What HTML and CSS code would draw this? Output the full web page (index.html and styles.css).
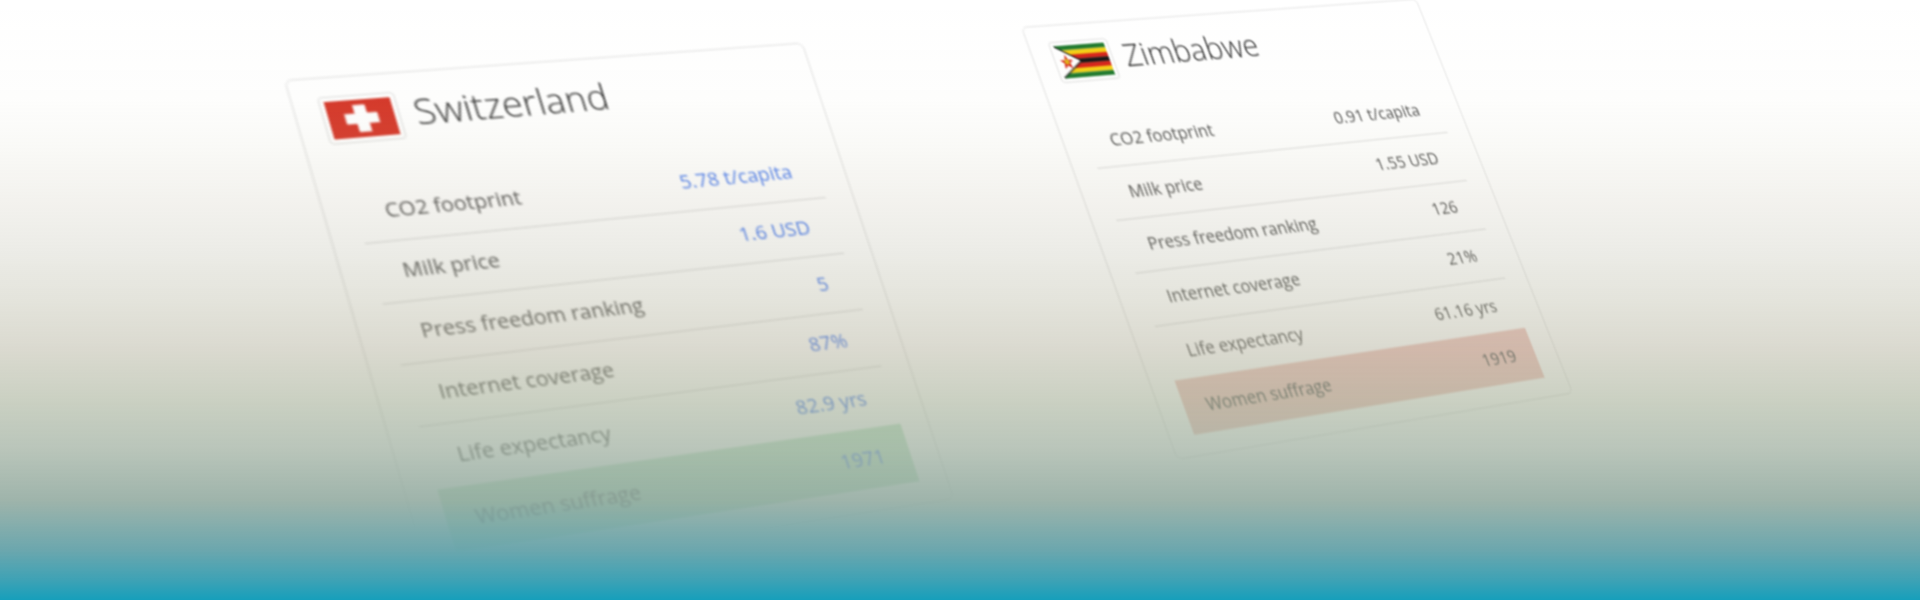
FILE: index.html
```html
<!DOCTYPE html>
<html lang="en">
<head>
    <meta charset="UTF-8">
    <meta name="viewport" content="width=device-width, initial-scale=1.0">
    <title>Country comparison</title>
    <link rel="stylesheet" href="styles.css">
</head>
<body>
    <div class="stage">
        <div class="card card-left">
            <div class="card-head">
                <div class="flag-box">
                    <svg class="flag" viewBox="0 0 64 36" preserveAspectRatio="none">
                        <rect width="64" height="36" fill="#d6392b"/>
                        <rect x="16" y="13" width="32" height="10" fill="#fff"/>
                        <rect x="26" y="5" width="12" height="26" fill="#fff"/>
                    </svg>
                </div>
                <div class="country">Switzerland</div>
            </div>
            <ul class="rows">
                <li class="row"><span>CO2 footprint</span><span class="value">5.78 t/capita</span></li>
                <li class="row"><span>Milk price</span><span class="value">1.6 USD</span></li>
                <li class="row"><span>Press freedom ranking</span><span class="value">5</span></li>
                <li class="row"><span>Internet coverage</span><span class="value">87%</span></li>
                <li class="row"><span>Life expectancy</span><span class="value">82.9 yrs</span></li>
                <li class="row row-good"><span>Women suffrage</span><span class="value">1971</span></li>
            </ul>
        </div>
        <div class="card card-right">
            <div class="card-head">
                <div class="flag-box">
                    <svg class="flag" viewBox="0 0 64 36" preserveAspectRatio="none">
                        <rect width="64" height="36" fill="#fff"/>
                        <rect width="64" height="5.2" fill="#1f7a2e"/>
                        <rect y="5.2" width="64" height="5.2" fill="#f5d116"/>
                        <rect y="10.4" width="64" height="5.2" fill="#d8261c"/>
                        <rect y="15.4" width="64" height="5.2" fill="#161616"/>
                        <rect y="20.4" width="64" height="5.2" fill="#d8261c"/>
                        <rect y="25.6" width="64" height="5.2" fill="#f5d116"/>
                        <rect y="30.8" width="64" height="5.2" fill="#1f7a2e"/>
                        <polygon points="0,0 30,18 0,36" fill="#161616"/>
                        <polygon points="0,1.5 27,18 0,34.500" fill="#fff"/>
                        <polygon points="10,10 12.200,15.800 18,16 13.500,19.700 15,25.500 10,22.300 5,25.500 6.500,19.700 2,16 7.800,15.800" fill="#d8261c"/>
                        <circle cx="10" cy="18" r="3" fill="#e0b21c"/>
                    </svg>
                </div>
                <div class="country">Zimbabwe</div>
            </div>
            <ul class="rows">
                <li class="row"><span>CO2 footprint</span><span class="value">0.91 t/capita</span></li>
                <li class="row"><span>Milk price</span><span class="value">1.55 USD</span></li>
                <li class="row"><span>Press freedom ranking</span><span class="value">126</span></li>
                <li class="row"><span>Internet coverage</span><span class="value">21%</span></li>
                <li class="row"><span>Life expectancy</span><span class="value">61.16 yrs</span></li>
                <li class="row row-bad"><span>Women suffrage</span><span class="value">1919</span></li>
            </ul>
        </div>
        <div class="fade"></div>
    </div>
</body>
</html>
```

FILE: styles.css
```css
* {
    box-sizing: border-box;
}

body {
    margin: 0;
    background-color: #fff;
    font-family: 'Open Sans', 'Noto Sans', sans-serif;
    color: #555;
}

.stage {
    position: relative;
    display: flex;
    align-items: flex-start;
    gap: 215px;
    height: 600px;
    padding: 27px 0 0 284px;
    overflow: hidden;
}

/* Both cards share one flat layout, the matrix tips it into the photo angle */
.card {
    flex: none;
    width: 522px;
    height: 491px;
    background-color: #fff;
    border: 1px solid #dedede;
    border-radius: 7px;
    transform-origin: 0 0;
    filter: blur(0.8px);
}

.card-left {
    margin-top: 53px;
    transform: matrix3d(1.08523, -0.07828, 0, 0.00017748, 0.28595, 0.98316, 0, -0.00007817, 0, 0, 1, 0, 0, 0, 0, 1);
}

.card-right {
    transform: matrix3d(0.82578, -0.05913, 0, 0.00017397, 0.30548, 0.84792, 0, -0.00007841, 0, 0, 1, 0, 0, 0, 0, 1);
}

.card-head {
    display: flex;
    align-items: center;
    gap: 14px;
    height: 107px;
    padding: 19px 0 40px 24px;
}

.flag-box {
    display: flex;
    width: 72px;
    height: 48px;
    padding: 4px;
    background-color: #fff;
    border: 1px solid #dcdcdc;
    border-radius: 4px;
}

.flag {
    display: block;
    width: 100%;
    height: 100%;
}

.country {
    margin-bottom: 8px;
    font-size: 37px;
    font-weight: 300;
    color: #333;
}

.rows {
    list-style: none;
    margin: 0;
    padding: 0 29px;
}

.row {
    display: flex;
    align-items: center;
    justify-content: space-between;
    height: 60px;
    padding: 0 27px 3px;
    font-size: 20.400px;
    border-bottom: 1px solid #d8d8d8;
}

.row:nth-child(5),
.row:last-child {
    border-bottom: none;
}

.card-left .value {
    color: #4f7ff0;
}

.row-good {
    background-color: #c2e6c8;
}

.row-bad {
    background-color: #efc6c0;
}

/* Washes the whole picture from clear white down to teal */
.fade {
    position: absolute;
    inset: 0;
    pointer-events: none;
    background: linear-gradient(to bottom,
        rgba(172, 172, 148, 0) 0,
        rgba(160, 160, 110, 0.02) 100px,
        rgba(180, 180, 142, 0.08) 150px,
        rgba(169, 162, 134, 0.14) 200px,
        rgba(160, 160, 135, 0.2) 250px,
        rgba(165, 165, 138, 0.3) 300px,
        rgba(167, 165, 141, 0.42) 350px,
        rgba(159, 170, 144, 0.55) 400px,
        rgba(155, 172, 156, 0.7) 450px,
        rgba(142, 167, 156, 0.85) 500px,
        rgba(103, 164, 171, 0.97) 550px,
        rgba(62, 162, 181, 1) 580px,
        rgba(22, 159, 187, 1) 600px);
}
```
